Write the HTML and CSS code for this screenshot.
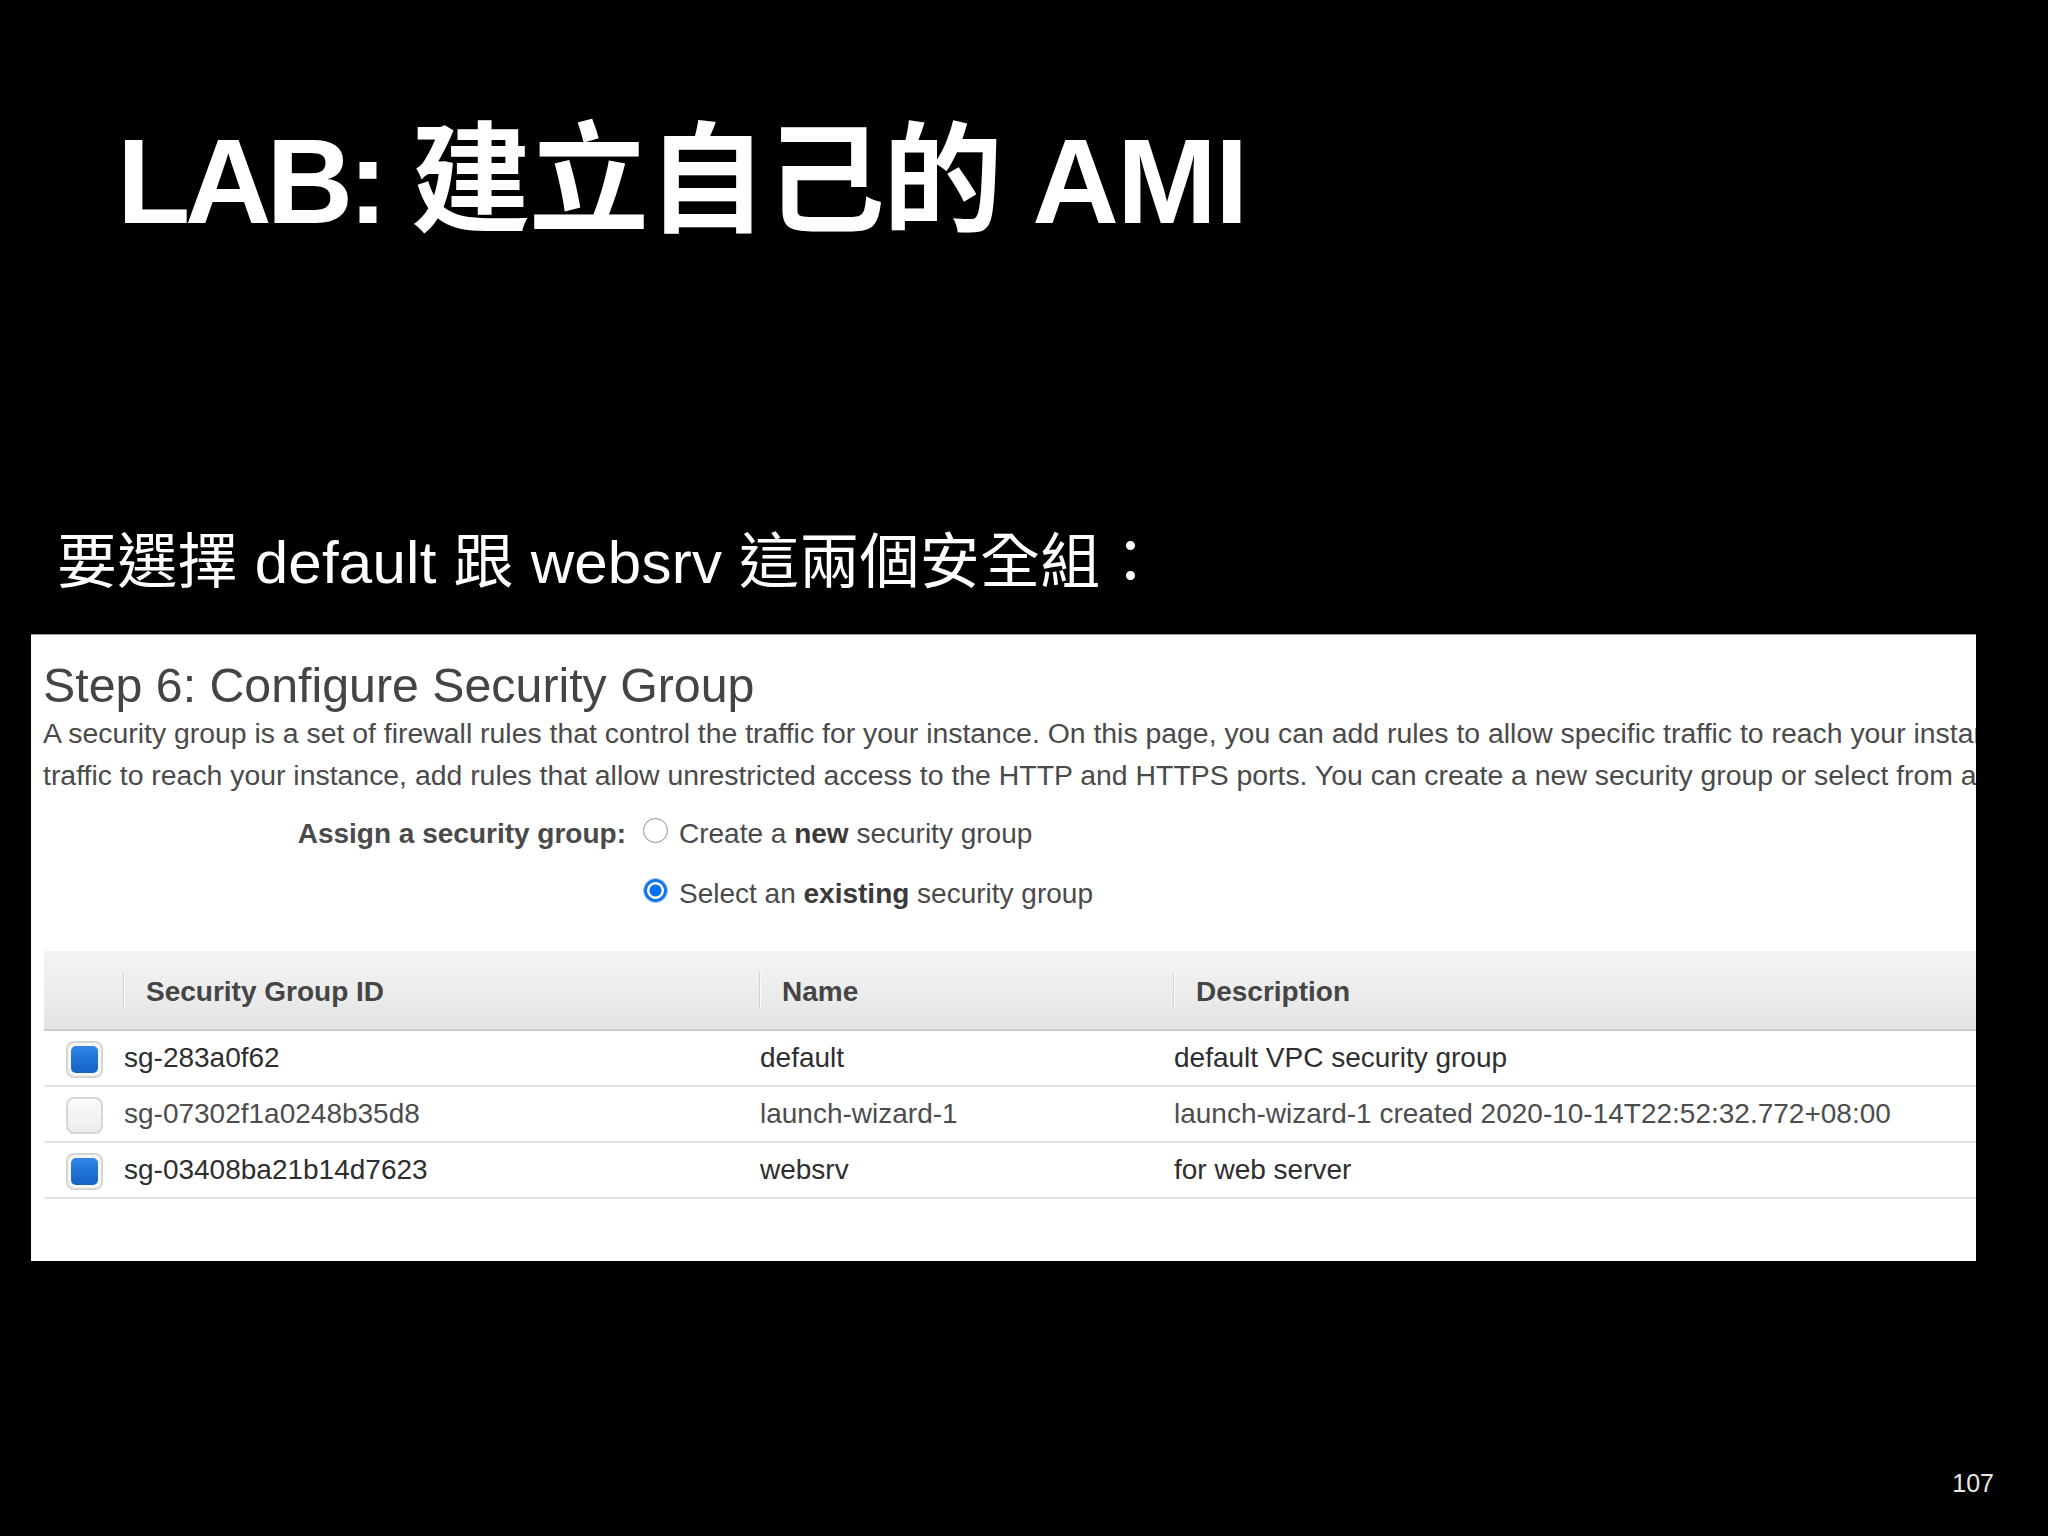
FILE: index.html
```html
<!DOCTYPE html>
<html lang="zh-Hant">
<head>
<meta charset="utf-8">
<title>LAB: 建立自己的 AMI</title>
<link rel="stylesheet" href="styles.css">
</head>
<body>
<div class="slide">
  <h1 class="title"><span class="tight">LAB: </span>建立自己的 AMI</h1>
  <p class="subtitle">要選擇 default 跟 websrv 這兩個安全組：</p>

  <div class="panel">
    <h2 class="step">Step 6: Configure Security Group</h2>
    <p class="desc">
      <span class="line">A security group is a set of firewall rules that control the traffic for your instance. On this page, you can add rules to allow specific traffic to reach your instance. For example, if you want to set up a web server and allow Internet</span>
      <span class="line">traffic to reach your instance, add rules that allow unrestricted access to the HTTP and HTTPS ports. You can create a new security group or select from an existing one below. Learn more about Amazon EC2 security groups.</span>
    </p>

    <div class="assign">
      <div class="assign-label">Assign a security group:</div>
      <div class="options">
        <div class="option"><span class="radio"></span><span class="opt-text">Create a <b>new</b> security group</span></div>
        <div class="option"><span class="radio checked"></span><span class="opt-text">Select an <b>existing</b> security group</span></div>
      </div>
    </div>

    <div class="table">
      <div class="row head">
        <div class="cell"></div>
        <div class="cell hcell"><span class="sep"></span><span class="th">Security Group ID</span></div>
        <div class="cell hcell"><span class="sep"></span><span class="th">Name</span></div>
        <div class="cell hcell"><span class="sep"></span><span class="th">Description</span></div>
      </div>
      <div class="row body selected">
        <div class="cell check-cell"><span class="checkbox on"><span class="fill"></span></span></div>
        <div class="cell">sg-283a0f62</div>
        <div class="cell">default</div>
        <div class="cell">default VPC security group</div>
      </div>
      <div class="row body">
        <div class="cell check-cell"><span class="checkbox"></span></div>
        <div class="cell">sg-07302f1a0248b35d8</div>
        <div class="cell">launch-wizard-1</div>
        <div class="cell">launch-wizard-1 created 2020-10-14T22:52:32.772+08:00</div>
      </div>
      <div class="row body selected">
        <div class="cell check-cell"><span class="checkbox on"><span class="fill"></span></span></div>
        <div class="cell">sg-03408ba21b14d7623</div>
        <div class="cell">websrv</div>
        <div class="cell">for web server</div>
      </div>
    </div>
  </div>

  <div class="page-num">107</div>
</div>
</body>
</html>
```

FILE: styles.css
```css
html, body {
  margin: 0;
  padding: 0;
  background: #000;
}

.slide {
  width: 2048px;
  height: 1536px;
  background: #000;
  display: flex;
  flex-direction: column;
  overflow: hidden;
  font-family: "Liberation Sans", "Noto Sans CJK TC", sans-serif;
}

.title {
  margin: 0;
  padding: 121px 0 0 117px;
  font-size: 120px;
  line-height: 120px;
  font-weight: 700;
  color: #fff;
  letter-spacing: -2px;
  white-space: nowrap;
}

.title .tight {
  letter-spacing: -5.2px;
}

.subtitle {
  margin: 292px 0 0 0;
  padding-left: 57px;
  font-size: 60px;
  line-height: 60px;
  font-weight: 400;
  color: #fff;
  letter-spacing: 0.25px;
  white-space: nowrap;
}

.panel {
  margin: 41px 0 0 31px;
  width: 1945px;
  height: 627px;
  flex: none;
  box-sizing: border-box;
  background: #fff;
  border-top: 1px solid #9a9a9a;
  padding: 26px 0 0 12px;
  overflow: hidden;
  color: #444;
}

.step {
  margin: 0;
  font-size: 48.3px;
  line-height: 48px;
  font-weight: 400;
  color: #444;
  white-space: nowrap;
}

.desc {
  margin: 3px 0 0 0;
  font-size: 28.4px;
  line-height: 42px;
  color: #4a4a4a;
}

.desc .line {
  display: block;
  white-space: nowrap;
}

.assign {
  margin-top: 8px;
  display: grid;
  grid-template-columns: 583px auto;
  column-gap: 17px;
  font-size: 28px;
  line-height: 28px;
}

.assign-label {
  height: 60px;
  display: flex;
  align-items: center;
  justify-content: flex-end;
  font-weight: 700;
  color: #4a4a4a;
  white-space: nowrap;
}

.options {
  display: flex;
  flex-direction: column;
}

.option {
  height: 60px;
  display: flex;
  align-items: center;
  gap: 11px;
  color: #4a4a4a;
  white-space: nowrap;
}

.option b {
  color: #3a3a3a;
}

.radio {
  width: 25px;
  height: 25px;
  box-sizing: border-box;
  border-radius: 50%;
  border: 1.5px solid #8f8f8f;
  background: #fff;
  margin-bottom: 7px;
  flex: none;
}

.radio.checked {
  border: none;
  background: radial-gradient(circle, #0a6ff2 0 5.6px, #ffffff 6.4px 8px, #1176ee 8.8px 11px, #9cc4f6 11.6px 12.5px, rgba(255,255,255,0) 12.6px);
}

.table {
  margin: 27px 0 0 1px;
  font-size: 28px;
  line-height: 28px;
}

.row {
  display: grid;
  grid-template-columns: 79px 636px 414px 1fr;
}

.row.head {
  height: 78px;
  border-bottom: 2px solid #cdcdcd;
  background: linear-gradient(to bottom, #f4f4f4 0%, #ececec 55%, #e3e3e3 100%);
}

.hcell {
  display: flex;
  align-items: center;
}

.sep {
  width: 2px;
  height: 36px;
  flex: none;
  background: linear-gradient(to right, #d2d2d2 50%, #fbfbfb 50%);
}

.th {
  padding-left: 21px;
  margin-top: 4px;
  font-weight: 700;
  color: #454545;
  white-space: nowrap;
}

.row.body {
  height: 54px;
  border-bottom: 2px solid #e4e4e4;
  background: #fff;
}

.row.body .cell {
  display: flex;
  align-items: center;
  padding-left: 1px;
  white-space: nowrap;
  color: #4d4d4d;
}

.row.body.selected .cell {
  color: #2e2e2e;
}

.row.body .check-cell {
  padding-left: 22px;
}

.checkbox {
  width: 37px;
  height: 37px;
  box-sizing: border-box;
  border-radius: 8px;
  border: 2px solid #d6d6d6;
  background: linear-gradient(to bottom, #fbfbfb, #ececec);
  display: flex;
  align-items: center;
  justify-content: center;
  margin-top: 3px;
}

.checkbox.on {
  background: #f6f6f6;
}

.checkbox .fill {
  width: 27px;
  height: 27px;
  border-radius: 5px;
  background: linear-gradient(to bottom, #2f86e6, #1462c6);
}

.page-num {
  margin-top: auto;
  padding: 0 54px 40px 0;
  text-align: right;
  font-size: 25px;
  line-height: 25px;
  color: #e8e8e8;
}
```
